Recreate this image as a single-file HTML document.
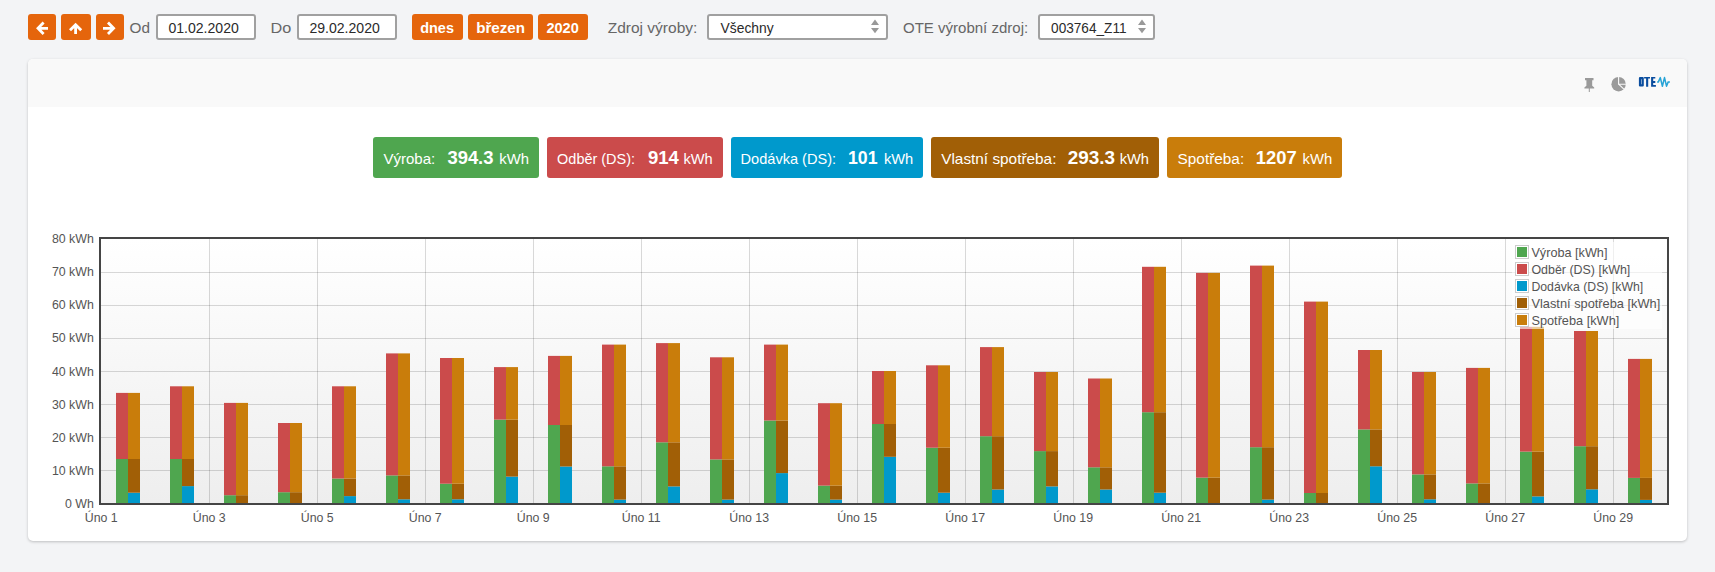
<!DOCTYPE html>
<html><head><meta charset="utf-8">
<style>
*{box-sizing:border-box}
html,body{margin:0;padding:0}
body{width:1715px;height:572px;overflow:hidden;background:#f3f4f6;font-family:"Liberation Sans",sans-serif;position:relative}
.a{position:absolute}
.btn{position:absolute;top:14px;height:26px;background:#e5650c;border-radius:3px}
.inp{position:absolute;top:14px;height:26px;border:2px solid #a0a0a0;border-radius:3px;background:#fff}
.panel{position:absolute;left:28px;top:59px;width:1659px;height:482px;background:#fff;border-radius:5px;box-shadow:0 1px 3px rgba(0,0,0,.22);overflow:hidden}
.phead{position:absolute;left:0;top:0;width:1659px;height:48px;background:#f9f9f9}
.stat{position:absolute;top:137px;height:41px;border-radius:3px}
</style></head><body>
<!-- toolbar -->
<div class="btn" style="left:28px;width:28px"><svg width="28" height="26" viewBox="0 0 28 26"><path d="M15.6 8.6 L10 14.3 L15.6 20 M10.5 14.3 H20" stroke="#fff" stroke-width="2.8" fill="none" stroke-linejoin="miter"/></svg></div>
<div class="btn" style="left:61px;width:30px"><svg width="30" height="26" viewBox="0 0 30 26"><path d="M9 16.3 L14.6 10.7 L20.2 16.3 M14.6 11.2 V20" stroke="#fff" stroke-width="2.8" fill="none"/></svg></div>
<div class="btn" style="left:96px;width:28px"><svg width="28" height="26" viewBox="0 0 28 26"><path d="M12 8.6 L17.6 14.3 L12 20 M17.1 14.3 H7" stroke="#fff" stroke-width="2.8" fill="none"/></svg></div>
<div class="inp" style="left:156px;width:100px"></div>
<div class="inp" style="left:297px;width:100px"></div>
<div class="btn" style="left:412px;width:51px"></div>
<div class="btn" style="left:468px;width:65px"></div>
<div class="btn" style="left:538px;width:50px"></div>
<div class="inp" style="left:707px;width:181px"></div>
<div class="inp" style="left:1038px;width:117px"></div>
<svg class="a" style="left:0;top:0" width="1715" height="50">
<path d="M875 19.5 L879 25 H871 Z M875 33.3 L879 28 H871 Z" fill="#999"/>
<path d="M1142 19.5 L1146 25 H1138 Z M1142 33.3 L1146 28 H1138 Z" fill="#999"/>
</svg>

<!-- panel -->
<div class="panel"><div class="phead"></div></div>
<!-- header icons -->
<svg class="a" style="left:0;top:0" width="1715" height="100">
<path d="M1585 78 H1593.5 V80.2 H1592.2 V85.8 L1594.2 87.6 V88.4 H1589.8 V92 H1588.8 V88.4 H1584.4 V87.6 L1586.4 85.8 V80.2 H1585 Z" fill="#9a9a9a"/>
<circle cx="1618.6" cy="84.2" r="7.2" fill="#9a9a9a"/>
<path d="M1618.6 76.5 V84.2 H1626.5 M1618.6 84.2 L1624.4 89.6" stroke="#f9f9f9" stroke-width="1.1" fill="none"/>
<path d="M1640 78.2 H1642.7 V85.4 H1640 Z" stroke="#0b4e9f" stroke-width="2.2" fill="none" stroke-linejoin="round"/>
<path d="M1644.1 76.9 H1650 V78.6 H1648.2 V86.7 H1646.1 V78.6 H1644.1 Z" fill="#0b4e9f"/>
<path d="M1651.1 76.9 H1655.3 V78.6 H1653.2 V81.1 H1655.3 V82.9 H1653.2 V85.1 H1655.9 V86.7 H1651.1 Z" fill="#0b4e9f"/>
<path d="M1657.1 82.1 H1658.3 L1660.3 77.6 L1662.4 86.2 L1664.5 77.6 L1666.5 86.2 L1668.2 81.9 H1669.9" stroke="#26a3d6" stroke-width="1.5" fill="none" stroke-linejoin="round"/>
</svg>

<!-- stats -->
<div class="stat" style="left:373px;width:166px;background:#4fa64f"></div>
<div class="stat" style="left:547px;width:176px;background:#cb4b4b"></div>
<div class="stat" style="left:731px;width:192px;background:#0099cc"></div>
<div class="stat" style="left:931px;width:228px;background:#a15f06"></div>
<div class="stat" style="left:1167px;width:175px;background:#c97d0b"></div>

<!-- chart -->
<svg class="a" style="left:0;top:0" width="1715" height="572">
<defs><linearGradient id="bg" x1="0" y1="0" x2="0" y2="1"><stop offset="0" stop-color="#ffffff"/><stop offset="1" stop-color="#eeeeee"/></linearGradient></defs>
<rect x="101" y="239" width="1566" height="264" fill="url(#bg)"/>
<g stroke="#000" stroke-opacity="0.15" stroke-width="1">
<line x1="101" y1="470.5" x2="1667" y2="470.5"/>
<line x1="101" y1="437.5" x2="1667" y2="437.5"/>
<line x1="101" y1="404.5" x2="1667" y2="404.5"/>
<line x1="101" y1="371.5" x2="1667" y2="371.5"/>
<line x1="101" y1="338.5" x2="1667" y2="338.5"/>
<line x1="101" y1="305.5" x2="1667" y2="305.5"/>
<line x1="101" y1="272.5" x2="1667" y2="272.5"/>
<line x1="209.5" y1="239" x2="209.5" y2="503"/>
<line x1="317.5" y1="239" x2="317.5" y2="503"/>
<line x1="425.5" y1="239" x2="425.5" y2="503"/>
<line x1="533.5" y1="239" x2="533.5" y2="503"/>
<line x1="641.5" y1="239" x2="641.5" y2="503"/>
<line x1="749.5" y1="239" x2="749.5" y2="503"/>
<line x1="857.5" y1="239" x2="857.5" y2="503"/>
<line x1="965.5" y1="239" x2="965.5" y2="503"/>
<line x1="1073.5" y1="239" x2="1073.5" y2="503"/>
<line x1="1181.5" y1="239" x2="1181.5" y2="503"/>
<line x1="1289.5" y1="239" x2="1289.5" y2="503"/>
<line x1="1397.5" y1="239" x2="1397.5" y2="503"/>
<line x1="1505.5" y1="239" x2="1505.5" y2="503"/>
<line x1="1613.5" y1="239" x2="1613.5" y2="503"/>
</g>
<rect x="116" y="459.0" width="12" height="44.0" fill="#4fa64f"/>
<rect x="116" y="392.9" width="12" height="66.1" fill="#cb4b4b"/>
<rect x="128" y="492.7" width="12" height="10.3" fill="#0099cc"/>
<rect x="128" y="459.0" width="12" height="33.7" fill="#a15f06"/>
<rect x="128" y="392.9" width="12" height="66.1" fill="#c97d0b"/>
<rect x="170" y="459.0" width="12" height="44.0" fill="#4fa64f"/>
<rect x="170" y="386.3" width="12" height="72.7" fill="#cb4b4b"/>
<rect x="182" y="486.1" width="12" height="16.9" fill="#0099cc"/>
<rect x="182" y="459.0" width="12" height="27.1" fill="#a15f06"/>
<rect x="182" y="386.3" width="12" height="72.7" fill="#c97d0b"/>
<rect x="224" y="495.2" width="12" height="7.8" fill="#4fa64f"/>
<rect x="224" y="402.9" width="12" height="92.3" fill="#cb4b4b"/>
<rect x="236" y="495.2" width="12" height="7.8" fill="#a15f06"/>
<rect x="236" y="402.9" width="12" height="92.3" fill="#c97d0b"/>
<rect x="278" y="492.2" width="12" height="10.8" fill="#4fa64f"/>
<rect x="278" y="423.0" width="12" height="69.2" fill="#cb4b4b"/>
<rect x="290" y="492.2" width="12" height="10.8" fill="#a15f06"/>
<rect x="290" y="423.0" width="12" height="69.2" fill="#c97d0b"/>
<rect x="332" y="478.5" width="12" height="24.5" fill="#4fa64f"/>
<rect x="332" y="386.3" width="12" height="92.2" fill="#cb4b4b"/>
<rect x="344" y="496.1" width="12" height="6.9" fill="#0099cc"/>
<rect x="344" y="478.5" width="12" height="17.6" fill="#a15f06"/>
<rect x="344" y="386.3" width="12" height="92.2" fill="#c97d0b"/>
<rect x="386" y="475.4" width="12" height="27.6" fill="#4fa64f"/>
<rect x="386" y="353.4" width="12" height="122.0" fill="#cb4b4b"/>
<rect x="398" y="499.3" width="12" height="3.7" fill="#0099cc"/>
<rect x="398" y="475.4" width="12" height="23.9" fill="#a15f06"/>
<rect x="398" y="353.4" width="12" height="122.0" fill="#c97d0b"/>
<rect x="440" y="483.7" width="12" height="19.3" fill="#4fa64f"/>
<rect x="440" y="358.0" width="12" height="125.7" fill="#cb4b4b"/>
<rect x="452" y="499.3" width="12" height="3.7" fill="#0099cc"/>
<rect x="452" y="483.7" width="12" height="15.6" fill="#a15f06"/>
<rect x="452" y="358.0" width="12" height="125.7" fill="#c97d0b"/>
<rect x="494" y="419.6" width="12" height="83.4" fill="#4fa64f"/>
<rect x="494" y="367.1" width="12" height="52.5" fill="#cb4b4b"/>
<rect x="506" y="476.6" width="12" height="26.4" fill="#0099cc"/>
<rect x="506" y="419.6" width="12" height="57.0" fill="#a15f06"/>
<rect x="506" y="367.1" width="12" height="52.5" fill="#c97d0b"/>
<rect x="548" y="425.0" width="12" height="78.0" fill="#4fa64f"/>
<rect x="548" y="355.9" width="12" height="69.1" fill="#cb4b4b"/>
<rect x="560" y="466.5" width="12" height="36.5" fill="#0099cc"/>
<rect x="560" y="425.0" width="12" height="41.5" fill="#a15f06"/>
<rect x="560" y="355.9" width="12" height="69.1" fill="#c97d0b"/>
<rect x="602" y="466.3" width="12" height="36.7" fill="#4fa64f"/>
<rect x="602" y="344.6" width="12" height="121.7" fill="#cb4b4b"/>
<rect x="614" y="499.6" width="12" height="3.4" fill="#0099cc"/>
<rect x="614" y="466.3" width="12" height="33.3" fill="#a15f06"/>
<rect x="614" y="344.6" width="12" height="121.7" fill="#c97d0b"/>
<rect x="656" y="442.3" width="12" height="60.7" fill="#4fa64f"/>
<rect x="656" y="343.1" width="12" height="99.2" fill="#cb4b4b"/>
<rect x="668" y="486.4" width="12" height="16.6" fill="#0099cc"/>
<rect x="668" y="442.3" width="12" height="44.1" fill="#a15f06"/>
<rect x="668" y="343.1" width="12" height="99.2" fill="#c97d0b"/>
<rect x="710" y="459.4" width="12" height="43.6" fill="#4fa64f"/>
<rect x="710" y="357.3" width="12" height="102.1" fill="#cb4b4b"/>
<rect x="722" y="499.6" width="12" height="3.4" fill="#0099cc"/>
<rect x="722" y="459.4" width="12" height="40.2" fill="#a15f06"/>
<rect x="722" y="357.3" width="12" height="102.1" fill="#c97d0b"/>
<rect x="764" y="420.5" width="12" height="82.5" fill="#4fa64f"/>
<rect x="764" y="344.6" width="12" height="75.9" fill="#cb4b4b"/>
<rect x="776" y="473.1" width="12" height="29.9" fill="#0099cc"/>
<rect x="776" y="420.5" width="12" height="52.6" fill="#a15f06"/>
<rect x="776" y="344.6" width="12" height="75.9" fill="#c97d0b"/>
<rect x="818" y="485.6" width="12" height="17.4" fill="#4fa64f"/>
<rect x="818" y="403.2" width="12" height="82.4" fill="#cb4b4b"/>
<rect x="830" y="499.6" width="12" height="3.4" fill="#0099cc"/>
<rect x="830" y="485.6" width="12" height="14.0" fill="#a15f06"/>
<rect x="830" y="403.2" width="12" height="82.4" fill="#c97d0b"/>
<rect x="872" y="424.0" width="12" height="79.0" fill="#4fa64f"/>
<rect x="872" y="371.0" width="12" height="53.0" fill="#cb4b4b"/>
<rect x="884" y="456.8" width="12" height="46.2" fill="#0099cc"/>
<rect x="884" y="424.0" width="12" height="32.8" fill="#a15f06"/>
<rect x="884" y="371.0" width="12" height="53.0" fill="#c97d0b"/>
<rect x="926" y="447.7" width="12" height="55.3" fill="#4fa64f"/>
<rect x="926" y="365.3" width="12" height="82.4" fill="#cb4b4b"/>
<rect x="938" y="492.7" width="12" height="10.3" fill="#0099cc"/>
<rect x="938" y="447.7" width="12" height="45.0" fill="#a15f06"/>
<rect x="938" y="365.3" width="12" height="82.4" fill="#c97d0b"/>
<rect x="980" y="436.2" width="12" height="66.8" fill="#4fa64f"/>
<rect x="980" y="347.1" width="12" height="89.1" fill="#cb4b4b"/>
<rect x="992" y="489.5" width="12" height="13.5" fill="#0099cc"/>
<rect x="992" y="436.2" width="12" height="53.3" fill="#a15f06"/>
<rect x="992" y="347.1" width="12" height="89.1" fill="#c97d0b"/>
<rect x="1034" y="451.1" width="12" height="51.9" fill="#4fa64f"/>
<rect x="1034" y="372.0" width="12" height="79.1" fill="#cb4b4b"/>
<rect x="1046" y="486.4" width="12" height="16.6" fill="#0099cc"/>
<rect x="1046" y="451.1" width="12" height="35.3" fill="#a15f06"/>
<rect x="1046" y="372.0" width="12" height="79.1" fill="#c97d0b"/>
<rect x="1088" y="467.3" width="12" height="35.7" fill="#4fa64f"/>
<rect x="1088" y="378.5" width="12" height="88.8" fill="#cb4b4b"/>
<rect x="1100" y="489.5" width="12" height="13.5" fill="#0099cc"/>
<rect x="1100" y="467.3" width="12" height="22.2" fill="#a15f06"/>
<rect x="1100" y="378.5" width="12" height="88.8" fill="#c97d0b"/>
<rect x="1142" y="412.2" width="12" height="90.8" fill="#4fa64f"/>
<rect x="1142" y="266.8" width="12" height="145.4" fill="#cb4b4b"/>
<rect x="1154" y="492.7" width="12" height="10.3" fill="#0099cc"/>
<rect x="1154" y="412.2" width="12" height="80.5" fill="#a15f06"/>
<rect x="1154" y="266.8" width="12" height="145.4" fill="#c97d0b"/>
<rect x="1196" y="477.6" width="12" height="25.4" fill="#4fa64f"/>
<rect x="1196" y="272.9" width="12" height="204.7" fill="#cb4b4b"/>
<rect x="1208" y="477.6" width="12" height="25.4" fill="#a15f06"/>
<rect x="1208" y="272.9" width="12" height="204.7" fill="#c97d0b"/>
<rect x="1250" y="447.2" width="12" height="55.8" fill="#4fa64f"/>
<rect x="1250" y="265.6" width="12" height="181.6" fill="#cb4b4b"/>
<rect x="1262" y="499.6" width="12" height="3.4" fill="#0099cc"/>
<rect x="1262" y="447.2" width="12" height="52.4" fill="#a15f06"/>
<rect x="1262" y="265.6" width="12" height="181.6" fill="#c97d0b"/>
<rect x="1304" y="493.0" width="12" height="10.0" fill="#4fa64f"/>
<rect x="1304" y="301.6" width="12" height="191.4" fill="#cb4b4b"/>
<rect x="1316" y="493.0" width="12" height="10.0" fill="#a15f06"/>
<rect x="1316" y="301.6" width="12" height="191.4" fill="#c97d0b"/>
<rect x="1358" y="429.4" width="12" height="73.6" fill="#4fa64f"/>
<rect x="1358" y="350.0" width="12" height="79.4" fill="#cb4b4b"/>
<rect x="1370" y="466.3" width="12" height="36.7" fill="#0099cc"/>
<rect x="1370" y="429.4" width="12" height="36.9" fill="#a15f06"/>
<rect x="1370" y="350.0" width="12" height="79.4" fill="#c97d0b"/>
<rect x="1412" y="474.4" width="12" height="28.6" fill="#4fa64f"/>
<rect x="1412" y="372.0" width="12" height="102.4" fill="#cb4b4b"/>
<rect x="1424" y="499.3" width="12" height="3.7" fill="#0099cc"/>
<rect x="1424" y="474.4" width="12" height="24.9" fill="#a15f06"/>
<rect x="1424" y="372.0" width="12" height="102.4" fill="#c97d0b"/>
<rect x="1466" y="483.4" width="12" height="19.6" fill="#4fa64f"/>
<rect x="1466" y="367.9" width="12" height="115.5" fill="#cb4b4b"/>
<rect x="1478" y="483.4" width="12" height="19.6" fill="#a15f06"/>
<rect x="1478" y="367.9" width="12" height="115.5" fill="#c97d0b"/>
<rect x="1520" y="451.6" width="12" height="51.4" fill="#4fa64f"/>
<rect x="1520" y="326.8" width="12" height="124.8" fill="#cb4b4b"/>
<rect x="1532" y="496.4" width="12" height="6.6" fill="#0099cc"/>
<rect x="1532" y="451.6" width="12" height="44.8" fill="#a15f06"/>
<rect x="1532" y="326.8" width="12" height="124.8" fill="#c97d0b"/>
<rect x="1574" y="446.2" width="12" height="56.8" fill="#4fa64f"/>
<rect x="1574" y="331.0" width="12" height="115.2" fill="#cb4b4b"/>
<rect x="1586" y="489.3" width="12" height="13.7" fill="#0099cc"/>
<rect x="1586" y="446.2" width="12" height="43.1" fill="#a15f06"/>
<rect x="1586" y="331.0" width="12" height="115.2" fill="#c97d0b"/>
<rect x="1628" y="477.9" width="12" height="25.1" fill="#4fa64f"/>
<rect x="1628" y="358.9" width="12" height="119.0" fill="#cb4b4b"/>
<rect x="1640" y="499.9" width="12" height="3.1" fill="#0099cc"/>
<rect x="1640" y="477.9" width="12" height="22.0" fill="#a15f06"/>
<rect x="1640" y="358.9" width="12" height="119.0" fill="#c97d0b"/>
<rect x="100" y="238" width="1568" height="266" fill="none" stroke="#454545" stroke-width="2"/>
<rect x="1512" y="242" width="150" height="87" fill="#fff" fill-opacity="0.6"/>
<rect x="1515.5" y="245.5" width="13" height="13" fill="#fff" stroke="#ccc" stroke-width="1"/><rect x="1517" y="247" width="10" height="10" fill="#4fa64f"/>
<rect x="1515.5" y="262.5" width="13" height="13" fill="#fff" stroke="#ccc" stroke-width="1"/><rect x="1517" y="264" width="10" height="10" fill="#cb4b4b"/>
<rect x="1515.5" y="279.5" width="13" height="13" fill="#fff" stroke="#ccc" stroke-width="1"/><rect x="1517" y="281" width="10" height="10" fill="#0099cc"/>
<rect x="1515.5" y="296.5" width="13" height="13" fill="#fff" stroke="#ccc" stroke-width="1"/><rect x="1517" y="298" width="10" height="10" fill="#a15f06"/>
<rect x="1515.5" y="313.5" width="13" height="13" fill="#fff" stroke="#ccc" stroke-width="1"/><rect x="1517" y="315" width="10" height="10" fill="#c97d0b"/>
</svg>
<!-- text overlay -->
<svg class="a" style="left:0;top:0" width="1715" height="572" font-family="Liberation Sans">
<text x="0" y="0" font-size="15" font-weight="normal" fill="#666" transform="translate(129.50 33) scale(1.0220 1)">Od</text>
<text x="0" y="0" font-size="14" font-weight="normal" fill="#2a2a2a" transform="translate(168.40 33) scale(1.0059 1)">01.02.2020</text>
<text x="0" y="0" font-size="15" font-weight="normal" fill="#666" transform="translate(270.52 33) scale(1.0823 1)">Do</text>
<text x="0" y="0" font-size="14" font-weight="normal" fill="#2a2a2a" transform="translate(309.40 33) scale(1.0059 1)">29.02.2020</text>
<text x="0" y="0" font-size="14" font-weight="bold" fill="#fff" transform="translate(420.20 33) scale(1.0338 1)">dnes</text>
<text x="0" y="0" font-size="14" font-weight="bold" fill="#fff" transform="translate(476.20 33) scale(1.0836 1)">březen</text>
<text x="0" y="0" font-size="14" font-weight="bold" fill="#fff" transform="translate(546.40 33) scale(1.0396 1)">2020</text>
<text x="0" y="0" font-size="15" font-weight="normal" fill="#666" transform="translate(607.70 33) scale(1.0348 1)">Zdroj výroby:</text>
<text x="0" y="0" font-size="14" font-weight="normal" fill="#2a2a2a" transform="translate(720.50 33) scale(0.9908 1)">Všechny</text>
<text x="0" y="0" font-size="15" font-weight="normal" fill="#666" transform="translate(903.00 33) scale(1.0018 1)">OTE výrobní zdroj:</text>
<text x="0" y="0" font-size="14" font-weight="normal" fill="#2a2a2a" transform="translate(1051.10 33) scale(0.9730 1)">003764_Z11</text>
<text x="0" y="0" font-size="14" font-weight="normal" fill="#fff" transform="translate(383.40 164) scale(1.0748 1)">Výroba:</text>
<text x="0" y="0" font-size="18" font-weight="bold" fill="#fff" transform="translate(447.40 164) scale(1.0237 1)">394.3</text>
<text x="0" y="0" font-size="14" font-weight="normal" fill="#fff" transform="translate(499.30 164) scale(1.0620 1)">kWh</text>
<text x="0" y="0" font-size="14" font-weight="normal" fill="#fff" transform="translate(557.10 164) scale(1.0339 1)">Odběr (DS):</text>
<text x="0" y="0" font-size="18" font-weight="bold" fill="#fff" transform="translate(647.90 164) scale(1.0293 1)">914</text>
<text x="0" y="0" font-size="14" font-weight="normal" fill="#fff" transform="translate(683.50 164) scale(1.0436 1)">kWh</text>
<text x="0" y="0" font-size="14" font-weight="normal" fill="#fff" transform="translate(740.56 164) scale(1.0421 1)">Dodávka (DS):</text>
<text x="0" y="0" font-size="18" font-weight="bold" fill="#fff" transform="translate(848.01 164) scale(0.9855 1)">101</text>
<text x="0" y="0" font-size="14" font-weight="normal" fill="#fff" transform="translate(883.90 164) scale(1.0473 1)">kWh</text>
<text x="0" y="0" font-size="14" font-weight="normal" fill="#fff" transform="translate(941.20 164) scale(1.0972 1)">Vlastní spotřeba:</text>
<text x="0" y="0" font-size="18" font-weight="bold" fill="#fff" transform="translate(1067.70 164) scale(1.0503 1)">293.3</text>
<text x="0" y="0" font-size="14" font-weight="normal" fill="#fff" transform="translate(1119.70 164) scale(1.0473 1)">kWh</text>
<text x="0" y="0" font-size="14" font-weight="normal" fill="#fff" transform="translate(1177.60 164) scale(1.0966 1)">Spotřeba:</text>
<text x="0" y="0" font-size="18" font-weight="bold" fill="#fff" transform="translate(1255.78 164) scale(1.0222 1)">1207</text>
<text x="0" y="0" font-size="14" font-weight="normal" fill="#fff" transform="translate(1302.50 164) scale(1.0620 1)">kWh</text>
<text x="0" y="0" font-size="12" font-weight="normal" fill="#545454" transform="translate(1531.40 257) scale(1.0573 1)">Výroba [kWh]</text>
<text x="0" y="0" font-size="12" font-weight="normal" fill="#545454" transform="translate(1531.40 274) scale(1.0377 1)">Odběr (DS) [kWh]</text>
<text x="0" y="0" font-size="12" font-weight="normal" fill="#545454" transform="translate(1531.40 291) scale(1.0245 1)">Dodávka (DS) [kWh]</text>
<text x="0" y="0" font-size="12" font-weight="normal" fill="#545454" transform="translate(1531.40 308) scale(1.0691 1)">Vlastní spotřeba [kWh]</text>
<text x="0" y="0" font-size="12" font-weight="normal" fill="#545454" transform="translate(1531.40 325) scale(1.0635 1)">Spotřeba [kWh]</text>
<text x="0" y="0" font-size="12" fill="#545454" transform="translate(64.95 508) scale(1.0298 1)">0 Wh</text>
<text x="0" y="0" font-size="12" fill="#545454" transform="translate(51.90 475) scale(1.0298 1)">10 kWh</text>
<text x="0" y="0" font-size="12" fill="#545454" transform="translate(51.90 442) scale(1.0298 1)">20 kWh</text>
<text x="0" y="0" font-size="12" fill="#545454" transform="translate(51.90 409) scale(1.0298 1)">30 kWh</text>
<text x="0" y="0" font-size="12" fill="#545454" transform="translate(51.90 376) scale(1.0298 1)">40 kWh</text>
<text x="0" y="0" font-size="12" fill="#545454" transform="translate(51.90 342) scale(1.0298 1)">50 kWh</text>
<text x="0" y="0" font-size="12" fill="#545454" transform="translate(51.90 309) scale(1.0298 1)">60 kWh</text>
<text x="0" y="0" font-size="12" fill="#545454" transform="translate(51.90 276) scale(1.0298 1)">70 kWh</text>
<text x="0" y="0" font-size="12" fill="#545454" transform="translate(51.90 243) scale(1.0298 1)">80 kWh</text>
<text x="0" y="0" font-size="12" fill="#545454" transform="translate(84.75 522) scale(1.0294 1)">Úno 1</text>
<text x="0" y="0" font-size="12" fill="#545454" transform="translate(192.75 522) scale(1.0294 1)">Úno 3</text>
<text x="0" y="0" font-size="12" fill="#545454" transform="translate(300.75 522) scale(1.0294 1)">Úno 5</text>
<text x="0" y="0" font-size="12" fill="#545454" transform="translate(408.75 522) scale(1.0294 1)">Úno 7</text>
<text x="0" y="0" font-size="12" fill="#545454" transform="translate(516.75 522) scale(1.0294 1)">Úno 9</text>
<text x="0" y="0" font-size="12" fill="#545454" transform="translate(621.77 522) scale(1.0294 1)">Úno 11</text>
<text x="0" y="0" font-size="12" fill="#545454" transform="translate(729.31 522) scale(1.0294 1)">Úno 13</text>
<text x="0" y="0" font-size="12" fill="#545454" transform="translate(837.31 522) scale(1.0294 1)">Úno 15</text>
<text x="0" y="0" font-size="12" fill="#545454" transform="translate(945.31 522) scale(1.0294 1)">Úno 17</text>
<text x="0" y="0" font-size="12" fill="#545454" transform="translate(1053.31 522) scale(1.0294 1)">Úno 19</text>
<text x="0" y="0" font-size="12" fill="#545454" transform="translate(1161.31 522) scale(1.0294 1)">Úno 21</text>
<text x="0" y="0" font-size="12" fill="#545454" transform="translate(1269.31 522) scale(1.0294 1)">Úno 23</text>
<text x="0" y="0" font-size="12" fill="#545454" transform="translate(1377.31 522) scale(1.0294 1)">Úno 25</text>
<text x="0" y="0" font-size="12" fill="#545454" transform="translate(1485.31 522) scale(1.0294 1)">Úno 27</text>
<text x="0" y="0" font-size="12" fill="#545454" transform="translate(1593.31 522) scale(1.0294 1)">Úno 29</text>
</svg>
</body></html>
